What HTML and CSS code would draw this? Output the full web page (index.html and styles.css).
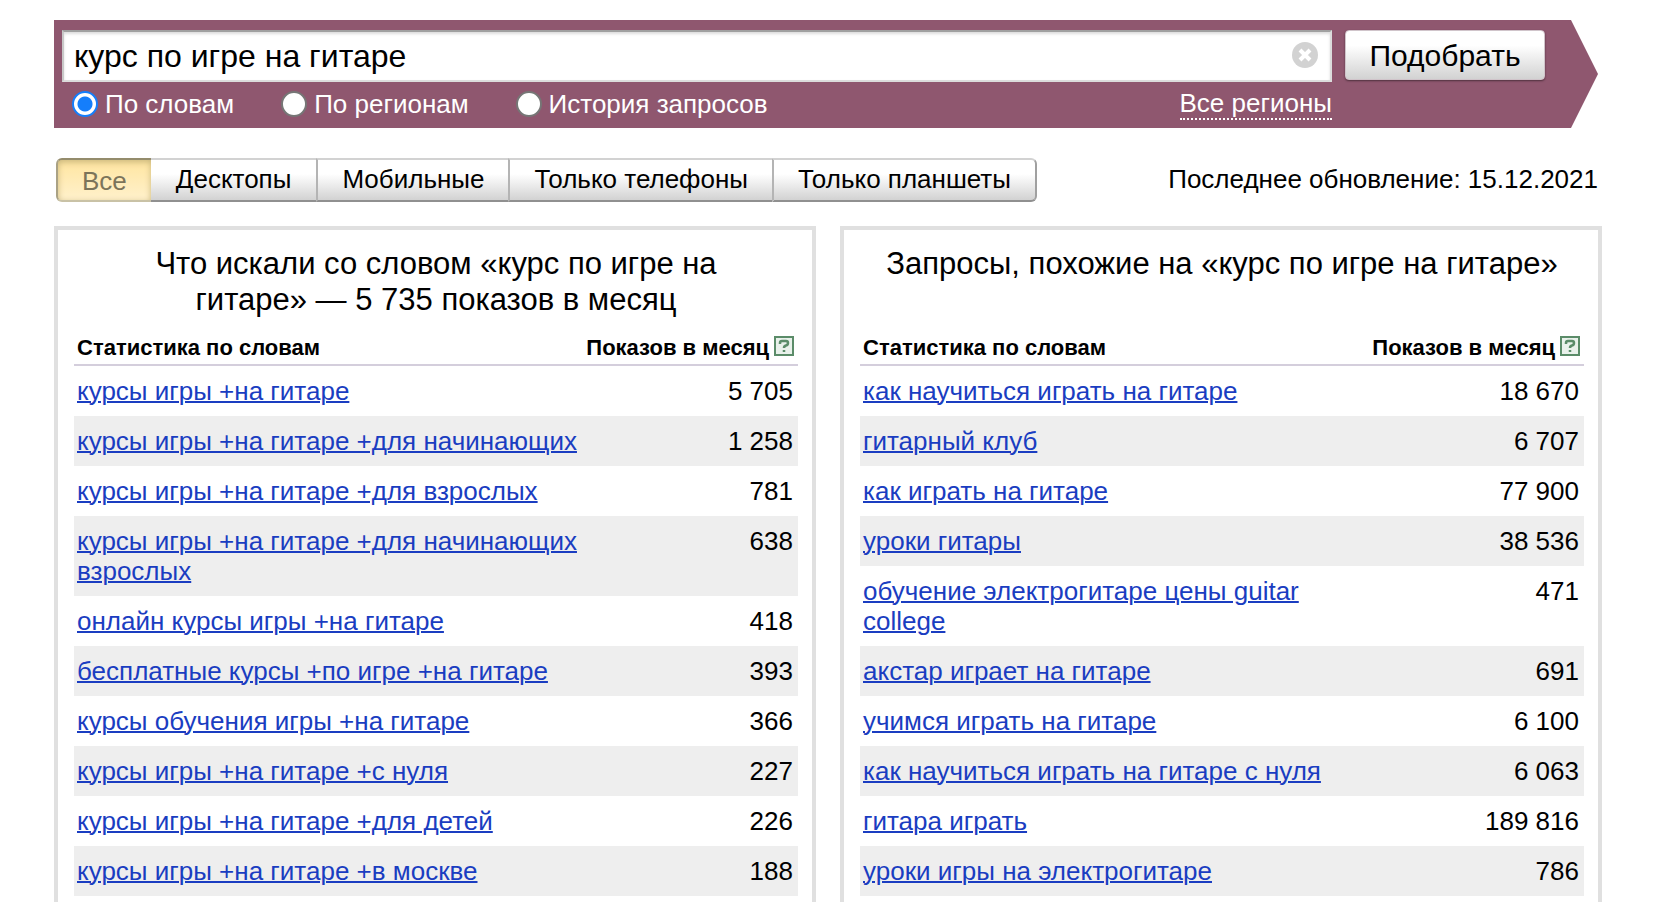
FILE: index.html
```html
<!DOCTYPE html>
<html lang="ru">
<head>
<meta charset="utf-8">
<title>Подбор слов</title>
<link rel="stylesheet" href="styles.css">
</head>
<body>
<form class="search">
  <div class="search-body">
    <div class="search-field">
      <input class="search-input" type="text" aria-label="Запрос" value="курс по игре на гитаре">
      <button class="search-clear" type="button" aria-label="Очистить">
        <svg viewBox="0 0 26 26" width="26" height="26"><circle cx="13" cy="13" r="13" fill="#d2d2d2"/><path d="M8 8l10 10M18 8L8 18" stroke="#fff" stroke-width="4"/></svg>
      </button>
    </div>
    <div class="search-options">
      <label class="option"><input class="radio" type="radio" name="mode" checked>По словам</label>
      <label class="option"><input class="radio" type="radio" name="mode">По регионам</label>
      <label class="option"><input class="radio" type="radio" name="mode">История запросов</label>
      <a class="regions" href="#">Все регионы</a>
    </div>
  </div>
  <button class="submit" type="button">Подобрать</button>
</form>

<div class="toolbar">
  <div class="tabs">
    <button class="tab tab-active" type="button">Все</button>
    <button class="tab" type="button">Десктопы</button>
    <button class="tab" type="button">Мобильные</button>
    <button class="tab" type="button">Только телефоны</button>
    <button class="tab" type="button">Только планшеты</button>
  </div>
  <span class="updated">Последнее обновление: 15.12.2021</span>
</div>

<main class="panels">
  <section class="panel">
    <h2 class="panel-title">Что искали со словом «курс по игре на гитаре» — 5 735 показов в месяц</h2>
    <table class="stats">
      <colgroup><col class="col-phrase"><col></colgroup>
      <thead><tr><th>Статистика по словам</th><th class="count"><span class="count-head">Показов в месяц<svg class="help" viewBox="0 0 20 20" width="20" height="20"><rect x="1" y="1" width="18" height="18" fill="#e9f1eb" stroke="#5b8c69" stroke-width="2"/><path d="M6 8V7Q6 5 8 5H12Q14 5 14 7Q14 9 12 9.500Q10 10 10 12M10 14V16" fill="none" stroke="#5b8c69" stroke-width="2.500"/></svg></span></th></tr></thead>
      <tbody>
        <tr><td class="phrase"><a href="#">курсы игры +на гитаре</a></td><td class="count">5 705</td></tr>
        <tr><td class="phrase"><a href="#">курсы игры +на гитаре +для начинающих</a></td><td class="count">1 258</td></tr>
        <tr><td class="phrase"><a href="#">курсы игры +на гитаре +для взрослых</a></td><td class="count">781</td></tr>
        <tr><td class="phrase"><a href="#">курсы игры +на гитаре +для начинающих взрослых</a></td><td class="count">638</td></tr>
        <tr><td class="phrase"><a href="#">онлайн курсы игры +на гитаре</a></td><td class="count">418</td></tr>
        <tr><td class="phrase"><a href="#">бесплатные курсы +по игре +на гитаре</a></td><td class="count">393</td></tr>
        <tr><td class="phrase"><a href="#">курсы обучения игры +на гитаре</a></td><td class="count">366</td></tr>
        <tr><td class="phrase"><a href="#">курсы игры +на гитаре +с нуля</a></td><td class="count">227</td></tr>
        <tr><td class="phrase"><a href="#">курсы игры +на гитаре +для детей</a></td><td class="count">226</td></tr>
        <tr><td class="phrase"><a href="#">курсы игры +на гитаре +в москве</a></td><td class="count">188</td></tr>
      </tbody>
    </table>
  </section>
  <section class="panel">
    <h2 class="panel-title">Запросы, похожие на «курс по игре на гитаре»</h2>
    <table class="stats">
      <colgroup><col class="col-phrase"><col></colgroup>
      <thead><tr><th>Статистика по словам</th><th class="count"><span class="count-head">Показов в месяц<svg class="help" viewBox="0 0 20 20" width="20" height="20"><rect x="1" y="1" width="18" height="18" fill="#e9f1eb" stroke="#5b8c69" stroke-width="2"/><path d="M6 8V7Q6 5 8 5H12Q14 5 14 7Q14 9 12 9.500Q10 10 10 12M10 14V16" fill="none" stroke="#5b8c69" stroke-width="2.500"/></svg></span></th></tr></thead>
      <tbody>
        <tr><td class="phrase"><a href="#">как научиться играть на гитаре</a></td><td class="count">18 670</td></tr>
        <tr><td class="phrase"><a href="#">гитарный клуб</a></td><td class="count">6 707</td></tr>
        <tr><td class="phrase"><a href="#">как играть на гитаре</a></td><td class="count">77 900</td></tr>
        <tr><td class="phrase"><a href="#">уроки гитары</a></td><td class="count">38 536</td></tr>
        <tr><td class="phrase"><a href="#">обучение электрогитаре цены guitar college</a></td><td class="count">471</td></tr>
        <tr><td class="phrase"><a href="#">акстар играет на гитаре</a></td><td class="count">691</td></tr>
        <tr><td class="phrase"><a href="#">учимся играть на гитаре</a></td><td class="count">6 100</td></tr>
        <tr><td class="phrase"><a href="#">как научиться играть на гитаре с нуля</a></td><td class="count">6 063</td></tr>
        <tr><td class="phrase"><a href="#">гитара играть</a></td><td class="count">189 816</td></tr>
        <tr><td class="phrase"><a href="#">уроки игры на электрогитаре</a></td><td class="count">786</td></tr>
      </tbody>
    </table>
  </section>
</main>
</body>
</html>
```

FILE: styles.css
```css
* { box-sizing: border-box; }

body {
  margin: 0;
  padding: 20px 62px 0 54px;
  background: #fff;
  color: #000;
  font: 26px/30px "Liberation Sans", Arial, sans-serif;
}

button, input { font-family: inherit; color: inherit; margin: 0; }

.search {
  display: flex;
  align-items: flex-start;
  gap: 13px;
  margin-right: 4px;
  padding: 10px 53px 8px 8px;
  background: #8f576f;
  clip-path: polygon(0 0, calc(100% - 27px) 0, 100% 50%, calc(100% - 27px) 100%, 0 100%);
}
.search-body { flex: 1; }
.search-field { position: relative; }
.search-input {
  display: block;
  width: 100%;
  height: 52px;
  padding: 0 56px 0 10px;
  border: 2px solid #dcdcdc;
  border-top-color: #a0a0a0;
  border-left-color: #c8c8c8;
  border-radius: 0;
  background: #fff;
  box-shadow: inset 0 2px 3px #ddd;
  font-size: 32px;
  outline: none;
}
.search-clear {
  position: absolute;
  top: 12px;
  right: 14px;
  padding: 0;
  border: 0;
  background: none;
}
.search-clear svg { display: block; }
.search-options {
  display: flex;
  align-items: center;
  gap: 47px;
  padding: 6px 0 0 10px;
  color: #fff;
}
.option { display: flex; align-items: center; gap: 7px; }
.radio {
  appearance: none;
  width: 26px;
  height: 26px;
  border: 2px solid #767676;
  border-radius: 50%;
  background: #fff;
}
.radio:checked {
  border-color: #157efb;
  background: radial-gradient(circle, #157efb 7px, #fff 8px);
}
.regions {
  margin-left: auto;
  border-bottom: 2px dotted #fff;
  color: #fff;
  text-decoration: none;
}
.submit {
  width: 200px;
  height: 50px;
  padding: 2px 0 0;
  border: 1px solid #d0c4ca;
  border-radius: 4px;
  background: linear-gradient(#fff 30%, #d2d2d2);
  box-shadow: 0 1px 2px #4f303d;
  font-size: 30px;
}

.toolbar {
  display: flex;
  justify-content: space-between;
  align-items: center;
  margin-top: 30px;
  padding: 0 4px 0 2px;
}
.tabs { display: flex; }
.tab {
  height: 44px;
  padding: 0 24px 2px;
  border: solid;
  border-width: 2px 0 2px 2px;
  border-color: #d2d2d2 #a0a0a0 #909090 #b4b4b4;
  background: linear-gradient(#fff 35%, #d2d2d2);
  font-size: 26px;
}
.tab:last-child { border-right-width: 2px; border-radius: 0 6px 6px 0; }
.tab-active {
  padding: 2px 24px 0;
  border-color: #948c6c #948c6c #c9c2a6 #aaa285;
  border-radius: 6px 0 0 6px;
  background: linear-gradient(#ffe5a0, #fff1cc);
  box-shadow: inset 0 2px 6px #c9b67c;
  color: #7c745a;
}
.tab-active + .tab { padding-right: 25px; border-left-width: 0; }
.tab-active + .tab { padding-left: 25px; }
.updated { padding-bottom: 2px; }

.panels {
  display: grid;
  grid-template-columns: 1fr 1fr;
  gap: 24px;
  margin-top: 24px;
}
.panel {
  padding: 16px 14px 28px 16px;
  border: 4px solid #e0e0e0;
}
.panel-title {
  margin: 0 26px;
  min-height: 72px;
  font-size: 31px;
  font-weight: 400;
  line-height: 36px;
  text-align: center;
}
.stats {
  width: 100%;
  margin-top: 14px;
  border-collapse: collapse;
  table-layout: fixed;
}
.col-phrase { width: 71%; }
.stats th {
  padding: 2px 3px;
  border-bottom: 2px solid #d4cedc;
  font-size: 22px;
  line-height: 28px;
  text-align: left;
}
.stats td { padding: 10px 3px; vertical-align: top; }
.stats tbody tr:nth-child(even) { background: #eee; }
.stats .count { padding-right: 5px; text-align: right; white-space: nowrap; }
.stats th.count { padding-right: 4px; }
.count-head { display: flex; justify-content: flex-end; gap: 5px; }
.help { display: block; flex: none; margin-top: 2px; }
.phrase a { color: #1a3dc1; text-decoration-thickness: 2px; }
```
